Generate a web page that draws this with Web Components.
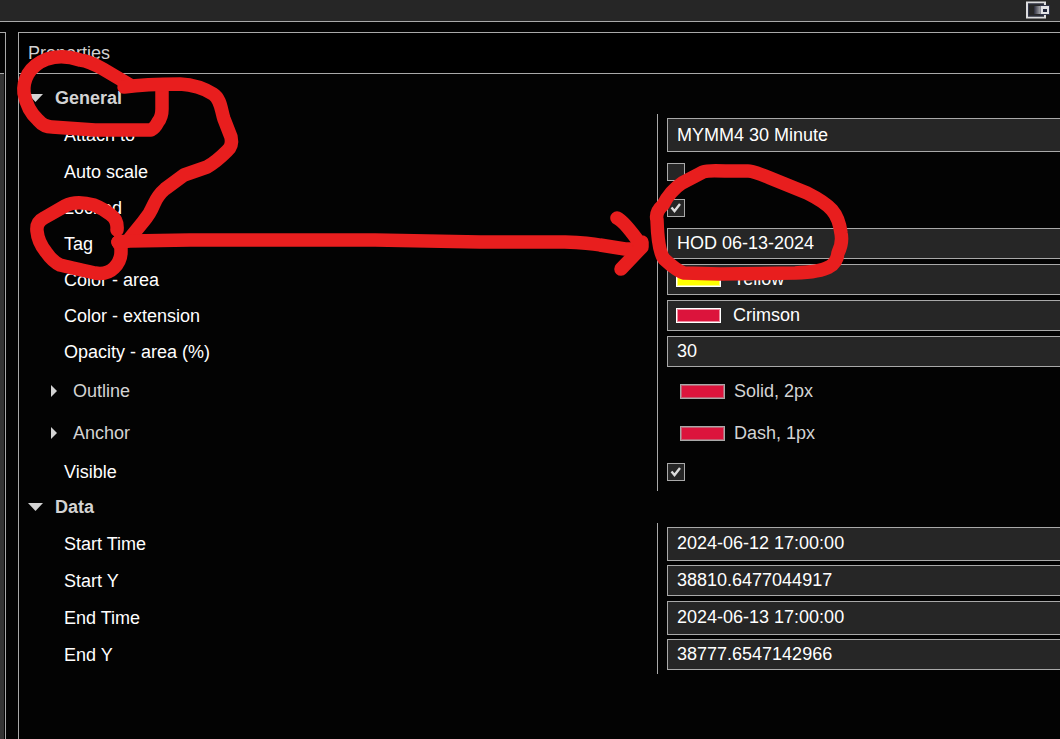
<!DOCTYPE html>
<html lang="en">
<head>
<meta charset="UTF-8">
<title>Properties</title>
<style>
  body {
    margin: 0;
    min-height: 100vh;
    display: flex;
    overflow: hidden;
    position: relative;
    background: #030303;
    color: #fff;
    font: 18px/20px "Liberation Sans", Arial, sans-serif;
    --line: #a9a9a9;
    --field: #262626;
    --muted: #d3d3d3;
  }
</style>
</head>
<body>
<app-window>
  <properties-panel heading="Properties">
    <property-group heading="General">
      <property-row label="Attach to" type="select" value="MYMM4 30 Minute" tall></property-row>
      <property-row label="Auto scale" type="checkbox"></property-row>
      <property-row label="Locked" type="checkbox" checked></property-row>
      <property-row label="Tag" type="text" value="HOD 06-13-2024"></property-row>
      <property-row label="Color - area" type="color" color="#ffff00" value="Yellow"></property-row>
      <property-row label="Color - extension" type="color" color="#dc143c" value="Crimson"></property-row>
      <property-row label="Opacity - area (%)" type="text" value="30"></property-row>
      <property-row label="Outline" type="stroke" color="#dc143c" value="Solid, 2px"></property-row>
      <property-row label="Anchor" type="stroke" color="#dc143c" value="Dash, 1px"></property-row>
      <property-row label="Visible" type="checkbox" checked></property-row>
    </property-group>
    <property-group heading="Data">
      <property-row label="Start Time" type="text" value="2024-06-12 17:00:00" tall></property-row>
      <property-row label="Start Y" type="text" value="38810.6477044917"></property-row>
      <property-row label="End Time" type="text" value="2024-06-13 17:00:00" tall></property-row>
      <property-row label="End Y" type="text" value="38777.6547142966"></property-row>
    </property-group>
  </properties-panel>
</app-window>
<marker-layer></marker-layer>

<script>
class AppWindow extends HTMLElement {
  constructor() {
    super();
    this.attachShadow({ mode: 'open' });

    this.shadowRoot.innerHTML = `
      <style>
        :host {
          flex: 1;
          min-width: 0;
          display: flex;
          flex-direction: column;
        }

        header {
          display: flex;
          justify-content: flex-end;
          height: 21px;
          padding-right: 10px;
          background: var(--field);
          border-bottom: 1px solid var(--line);
        }

        header button {
          display: block;
          padding: 0;
          border: 0;
          background: none;
        }

        svg {
          display: block;
        }

        .workspace {
          flex: 1;
          display: flex;
          gap: 12px;
          padding-top: 10px;
        }

        .side {
          display: flex;
          flex-direction: column;
          width: 5px;
          border-top: 1px solid var(--line);
          border-right: 1px solid var(--line);
        }

        .side-head {
          height: 40px;
          margin-right: 1px;
          border-bottom: 1px solid var(--line);
        }

        .side-body {
          flex: 1;
          margin-right: 1px;
          background: #333;
        }
      </style>

      <header>
        <button type="button" aria-label="Dock window">
          <svg width="24" height="21" viewBox="0 0 24 21">
            <defs>
              <linearGradient id="fade">
                <stop offset="0" stop-color="#2b2c3c"/>
                <stop offset="1" stop-color="#b5b5b8"/>
              </linearGradient>
            </defs>
            <rect x="1" y="2.500" width="18" height="15" fill="#262626" stroke="#dcdcde" stroke-width="2"/>
            <rect x="2.500" y="4" width="15" height="12" fill="none" stroke="#303448"/>
            <rect x="8" y="6" width="7" height="8" fill="url(#fade)"/>
            <rect x="14" y="5" width="10" height="10" fill="#303448"/>
            <rect x="14.500" y="6" width="8.500" height="8" fill="#e2e2e6"/>
            <rect x="17" y="9" width="4" height="3" fill="#20253a"/>
          </svg>
        </button>
      </header>
      <div class="workspace">
        <div class="side">
          <div class="side-head"></div>
          <div class="side-body"></div>
        </div>
        <slot></slot>
      </div>
    `;
  }
}

class PropertiesPanel extends HTMLElement {
  constructor() {
    super();
    this.attachShadow({ mode: 'open' });

    this.shadowRoot.innerHTML = `
      <style>
        :host {
          flex: 1;
          min-width: 0;
          display: block;
          border-top: 1px solid var(--line);
          border-left: 1px solid var(--line);
        }

        h1 {
          margin: 0;
          padding: 10px 9px;
          border-bottom: 1px solid var(--line);
          background: #000;
          color: var(--muted);
          font: inherit;
        }

        .groups {
          padding-top: 8px;
        }
      </style>

      <h1></h1>
      <div class="groups"><slot></slot></div>
    `;
  }

  connectedCallback() {
    this.shadowRoot.querySelector('h1').textContent = this.getAttribute('heading');
  }
}

class PropertyGroup extends HTMLElement {
  constructor() {
    super();
    this.attachShadow({ mode: 'open' });

    this.shadowRoot.innerHTML = `
      <style>
        :host {
          display: block;
        }

        h2 {
          margin: 0;
          font: inherit;
        }

        button {
          display: flex;
          align-items: center;
          gap: 12px;
          width: 100%;
          height: 32px;
          padding: 0 9px;
          border: 0;
          background: none;
          color: var(--muted);
          font: inherit;
          font-weight: bold;
        }

        .rows {
          padding-bottom: 3px;
          /* divider between the label and value columns */
          background: linear-gradient(var(--line), var(--line)) 638px 0 / 1px 100% no-repeat;
        }

        .rows[hidden] {
          display: none;
        }
      </style>

      <h2>
        <button type="button" aria-expanded="true">
          <svg width="15" height="8" viewBox="0 0 15 8"><path d="M0 0H15L7.500 8Z" fill="#d3d3d3"/></svg>
          <span></span>
        </button>
      </h2>
      <div class="rows"><slot></slot></div>
    `;

    this.button = this.shadowRoot.querySelector('button');
    this.rows = this.shadowRoot.querySelector('.rows');
    this.button.addEventListener('click', () => this.toggle());
  }

  connectedCallback() {
    this.shadowRoot.querySelector('span').textContent = this.getAttribute('heading');
  }

  toggle() {
    this.rows.hidden = !this.rows.hidden;
    this.button.setAttribute('aria-expanded', String(!this.rows.hidden));
  }
}

class PropertyRow extends HTMLElement {
  constructor() {
    super();
    this.attachShadow({ mode: 'open' });
  }

  connectedCallback() {
    const label = this.getAttribute('label');
    const type = this.getAttribute('type');

    this.shadowRoot.innerHTML = `
      <style>
        :host {
          display: grid;
          grid-template-columns: 638px minmax(0, 1fr);
          align-items: center;
          box-sizing: border-box;
          height: 36px;
          padding-top: 4px;
        }

        :host([tall]) {
          height: 38px;
        }

        :host([type="stroke"]) {
          height: 42px;
          color: var(--muted);
        }

        .name {
          justify-self: start;
          padding-left: 45px;
        }

        .expander {
          display: flex;
          align-items: center;
          gap: 16px;
          padding: 0 0 0 32px;
          border: 0;
          background: none;
          color: inherit;
          font: inherit;
        }

        .value {
          display: flex;
          align-items: center;
          align-self: start;
          padding-left: 10px;
        }

        :host([type="stroke"]) .value {
          align-self: center;
          gap: 9px;
          padding-left: 23px;
        }

        :host([type="checkbox"]) .value {
          align-self: center;
        }

        .field {
          flex: 1;
          min-width: 0;
          display: flex;
          align-items: center;
          gap: 12px;
          box-sizing: border-box;
          height: 31px;
          padding-left: 9px;
          border: 1px solid var(--line);
          border-right: 0;
          background: var(--field);
        }

        :host([type="color"]) .field {
          padding-left: 8px;
        }

        :host([tall]) .field {
          height: 34px;
        }

        input[type="text"], select {
          flex: 1;
          min-width: 0;
          box-sizing: border-box;
          height: 24px;
          padding: 0;
          border: 0;
          outline: 0;
          background: none;
          color: inherit;
          font: inherit;
          appearance: none;
        }

        :host([type="color"]) select,
        :host([tall]) input {
          padding-bottom: 2px;
        }

        input[type="checkbox"] {
          appearance: none;
          box-sizing: border-box;
          width: 18px;
          height: 18px;
          margin: 0;
          border: 1px solid var(--line);
          background: var(--field);
        }

        input[type="checkbox"]:checked {
          background: var(--field) url("data:image/svg+xml,%3Csvg xmlns='http://www.w3.org/2000/svg' viewBox='0 0 16 16'%3E%3Cpath d='M3.500 7.500L6.500 11L12 4' fill='none' stroke='%23dcdcdc' stroke-width='2.400'/%3E%3C/svg%3E") center / 16px 16px no-repeat;
        }

        .swatch {
          flex: none;
          box-sizing: border-box;
          width: 45px;
          height: 15px;
          border: 1px solid #fff;
          outline-offset: -2px;
          outline: 1px solid rgba(255, 255, 255, 0.5);
          background: var(--swatch);
        }

        :host([type="stroke"]) .swatch {
          border-color: var(--line);
          outline-color: rgba(169, 169, 169, 0.5);
        }
      </style>

      ${type === 'stroke'
        ? `<button type="button" class="expander" aria-expanded="false">
            <svg width="6" height="12" viewBox="0 0 6 12"><path d="M0 0L6 6L0 12Z" fill="#d3d3d3"/></svg>
            <span>${label}</span>
          </button>`
        : `<label class="name" for="control">${label}</label>`}
      <div class="value">${this.renderValue(type)}</div>
    `;

    const swatch = this.shadowRoot.querySelector('.swatch');
    if (swatch) {
      swatch.style.setProperty('--swatch', this.getAttribute('color'));
    }
  }

  renderValue(type) {
    const value = this.getAttribute('value') || '';

    if (type === 'checkbox') {
      return `<input id="control" type="checkbox" ${this.hasAttribute('checked') ? 'checked' : ''}>`;
    }
    if (type === 'select') {
      return `<div class="field"><select id="control"><option>${value}</option></select></div>`;
    }
    if (type === 'color') {
      return `<div class="field"><span class="swatch"></span><select id="control"><option>${value}</option></select></div>`;
    }
    if (type === 'stroke') {
      return `<span class="swatch"></span><span>${value}</span>`;
    }
    return `<div class="field"><input id="control" type="text" value="${value}"></div>`;
  }
}

// freehand pen strokes drawn on top of the panel
class MarkerLayer extends HTMLElement {
  constructor() {
    super();
    this.attachShadow({ mode: 'open' });

    this.shadowRoot.innerHTML = `
      <style>
        :host {
          position: absolute;
          top: 0;
          left: 0;
          pointer-events: none;
        }

        svg {
          display: block;
        }
      </style>

      <svg width="860" height="300" viewBox="0 0 860 300" fill="none" stroke="#e81e1e"
           stroke-width="13.500" stroke-linecap="round" stroke-linejoin="round">
        <path d="M130 85L103 69Q89 61 80 60Q62 54 47 59Q34 64 28 74Q23 83 24 93Q27 110 38 120Q44 127 52 127L95 130H151Q155 128 158 122Q162 117 162 109V89"/>
        <path d="M124 87Q145 84 180 84Q199 85 213 94C221 99 221 110 224 119L231 137Q233 146 227 151Q216 162 207 167L184 175L165 189Q158 195 154 204Q150 214 143 222L130 238"/>
        <path d="M117 230Q118 220 111 215Q104 209 94 205Q76 200 65 206L44 218Q36 222 37 231Q38 242 46 252Q53 262 60 265Q68 267 95 273Q107 275 114 268Q121 261 121 252V247L118 242"/>
        <path d="M118 242L130 241L190 240H375L480 242L565 242Q590 243 600 245L625 249H638"/>
        <path d="M617 218Q624 221 641 245M621 269L642 247V242"/>
        <path d="M657 220Q655 212 663 205Q670 191 682 183L703 172Q708 170 725 171H748Q753 171 770 178L807 193Q825 202 832 210Q839 218 841 233Q843 243 838 253Q837 263 829 267Q820 272 795 273L720 274L684 273Q677 271 664 259Q658 251 657 220Z"/>
      </svg>
    `;
  }
}

customElements.define('app-window', AppWindow);
customElements.define('properties-panel', PropertiesPanel);
customElements.define('property-group', PropertyGroup);
customElements.define('property-row', PropertyRow);
customElements.define('marker-layer', MarkerLayer);
</script>
</body>
</html>
